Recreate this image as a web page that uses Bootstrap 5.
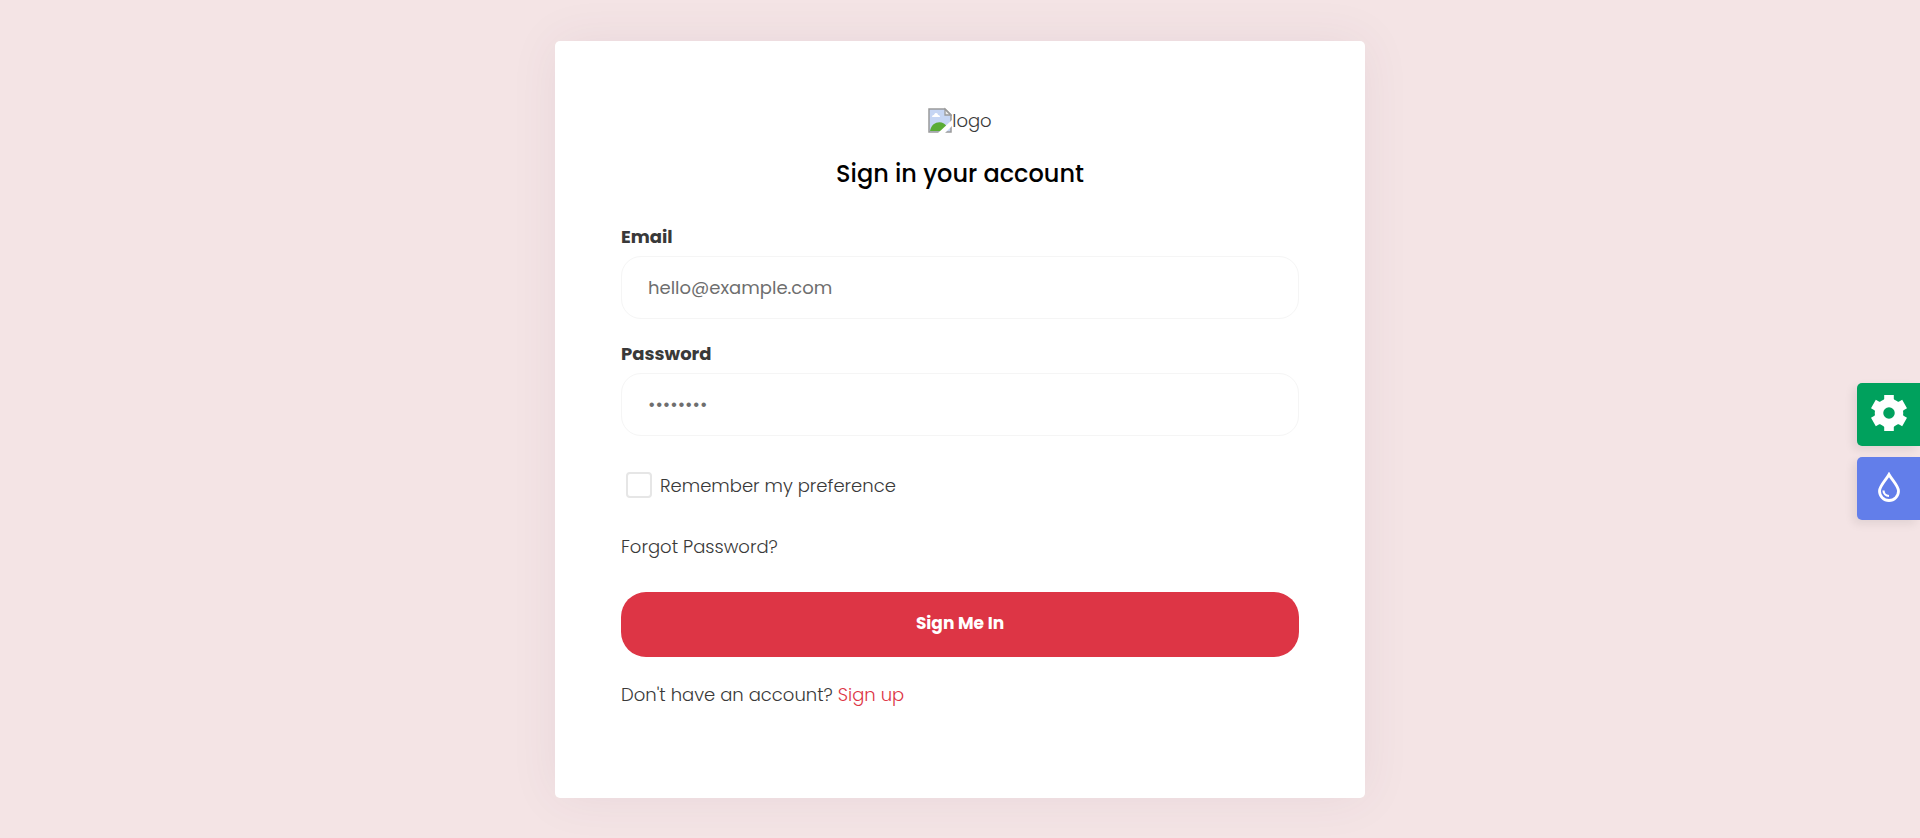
<!DOCTYPE html>
<html lang="en">
<head>
<meta charset="utf-8">
<meta name="viewport" content="width=device-width, initial-scale=1">
<title>Sign in</title>
<link href="https://cdn.jsdelivr.net/npm/bootstrap@5.3.0/dist/css/bootstrap.min.css" rel="stylesheet">
<style>
  body { background: #f4e4e5; color: #393939; font-family: Poppins, Inter, "Open Sans", sans-serif; font-size: 18px; line-height: 27px; font-weight: 300; }
  a { color: inherit; text-decoration: none; }
  .auth-wrap { max-width: 1680px; }
  .auth-wrap, .auth-wrap .row { --bs-gutter-x: 30px; }
  .auth-panel { background: #fff; border-radius: 5px; padding: 66px 66px 90px; box-shadow: 0 0 50px rgba(82, 63, 105, .07); }
  .logo-line { margin-bottom: 22px; }
  .auth-title { font-size: 24px; line-height: 36px; font-weight: 500; color: #000; margin-bottom: 31px; }
  .field { margin-bottom: 21px; }
  .field label { display: block; font-weight: 700; margin-bottom: 6px; }
  .field .form-control { height: 63px; padding: 0 26px; border-color: #f5f5f5; border-radius: 20px; font-size: 18px; font-weight: 400; color: #6e6e6e; }
  .field .form-control::placeholder { color: #6e6e6e; }
  .remember { gap: 8px; margin: 36px 0 34px 5px; }
  .remember .form-check-input { width: 26px; height: 26px; margin: 0; border: 2px solid #e6e6e6; border-radius: 4px; }
  .forgot { margin-bottom: 32px; }
  .btn-sign { height: 65px; background: #dd3545; color: #fff; border-radius: 25px; font-size: 17px; font-weight: 700; margin-bottom: 24px; }
  .signup { color: #dd3545; }
  .side-tools { top: 383px; gap: 11px; }
  .side-tools button { width: 63px; height: 63px; padding: 0 0 3px; border: 0; border-radius: 5px 0 0 5px; color: #fff; box-shadow: -4px 4px 10px rgba(0, 0, 0, .08); }
  .tool-settings { background: #00a15d; }
  .tool-theme { background: #627eea; }
</style>
</head>
<body>
<main class="container-fluid auth-wrap min-vh-100 d-flex flex-column justify-content-center">
  <div class="row justify-content-center">
    <div class="col-md-6">
      <div class="auth-panel">
        <div class="logo-line d-flex justify-content-center">
          <a href="#" class="d-flex">
            <svg width="24" height="27" viewBox="0 0 24 27" aria-hidden="true">
              <path d="M1 2h16l6 6v17H1z" fill="#c6d6f4"/>
              <path d="M4 10c0-2 2-2 2-2 1-3 4-2 4 0 2 0 2 2 2 2z" fill="#fff"/>
              <path d="M2 24c2-11 14-11 17-4v4z" fill="#5aac35"/>
              <path d="M17 2v6h6z" fill="#eee" stroke="#9a9a9a" stroke-width="1.3"/>
              <path d="M1 25V2h16l6 6v17z" fill="none" stroke="#9a9a9a" stroke-width="1.5"/>
              <path d="M10 26 24 13v6l-7 7z" fill="#fff"/>
            </svg><span>logo</span>
          </a>
        </div>
        <h1 class="auth-title text-center">Sign in your account</h1>
        <form>
          <div class="field">
            <label for="email">Email</label>
            <input id="email" type="email" class="form-control" placeholder="hello@example.com">
          </div>
          <div class="field">
            <label for="password">Password</label>
            <input id="password" type="password" class="form-control" value="Password">
          </div>
          <div class="remember d-flex align-items-center">
            <input id="remember" type="checkbox" class="form-check-input">
            <label for="remember">Remember my preference</label>
          </div>
          <div class="forgot"><a href="#">Forgot Password?</a></div>
          <button type="submit" class="btn btn-sign w-100">Sign Me In</button>
        </form>
        <p class="mb-0">Don't have an account? <a href="#" class="signup">Sign up</a></p>
      </div>
    </div>
  </div>
</main>
<aside class="side-tools position-fixed end-0 d-flex flex-column">
  <button type="button" class="tool-settings d-flex align-items-center justify-content-center" aria-label="Settings">
    <svg width="36" height="36" viewBox="-18 -18 36 36" fill="currentColor">
      <defs><path id="tooth" d="M-6.500-11-4.800-14V-18H4.800V-14L6.500-11z"/></defs>
      <use href="#tooth"/><use href="#tooth" transform="rotate(60)"/><use href="#tooth" transform="rotate(120)"/>
      <use href="#tooth" transform="rotate(180)"/><use href="#tooth" transform="rotate(240)"/><use href="#tooth" transform="rotate(300)"/>
      <circle r="10" fill="none" stroke="currentColor" stroke-width="8.500"/>
    </svg>
  </button>
  <button type="button" class="tool-theme d-flex align-items-center justify-content-center" aria-label="Theme colour">
    <svg width="24" height="30" viewBox="0 0 24 30" fill="none" stroke="currentColor">
      <path d="M12 2.500C9 8 2.500 14 2.500 19a9.500 9.500 0 0 0 19 0C21.500 14 15 8 12 2.500z" stroke-width="2.800"/>
      <path d="M6.500 18.500c0 3 2.300 5.300 5.500 5.500" stroke-width="2.200"/>
    </svg>
  </button>
</aside>
<script src="https://cdn.jsdelivr.net/npm/bootstrap@5.3.0/dist/js/bootstrap.bundle.min.js"></script>
</body>
</html>
